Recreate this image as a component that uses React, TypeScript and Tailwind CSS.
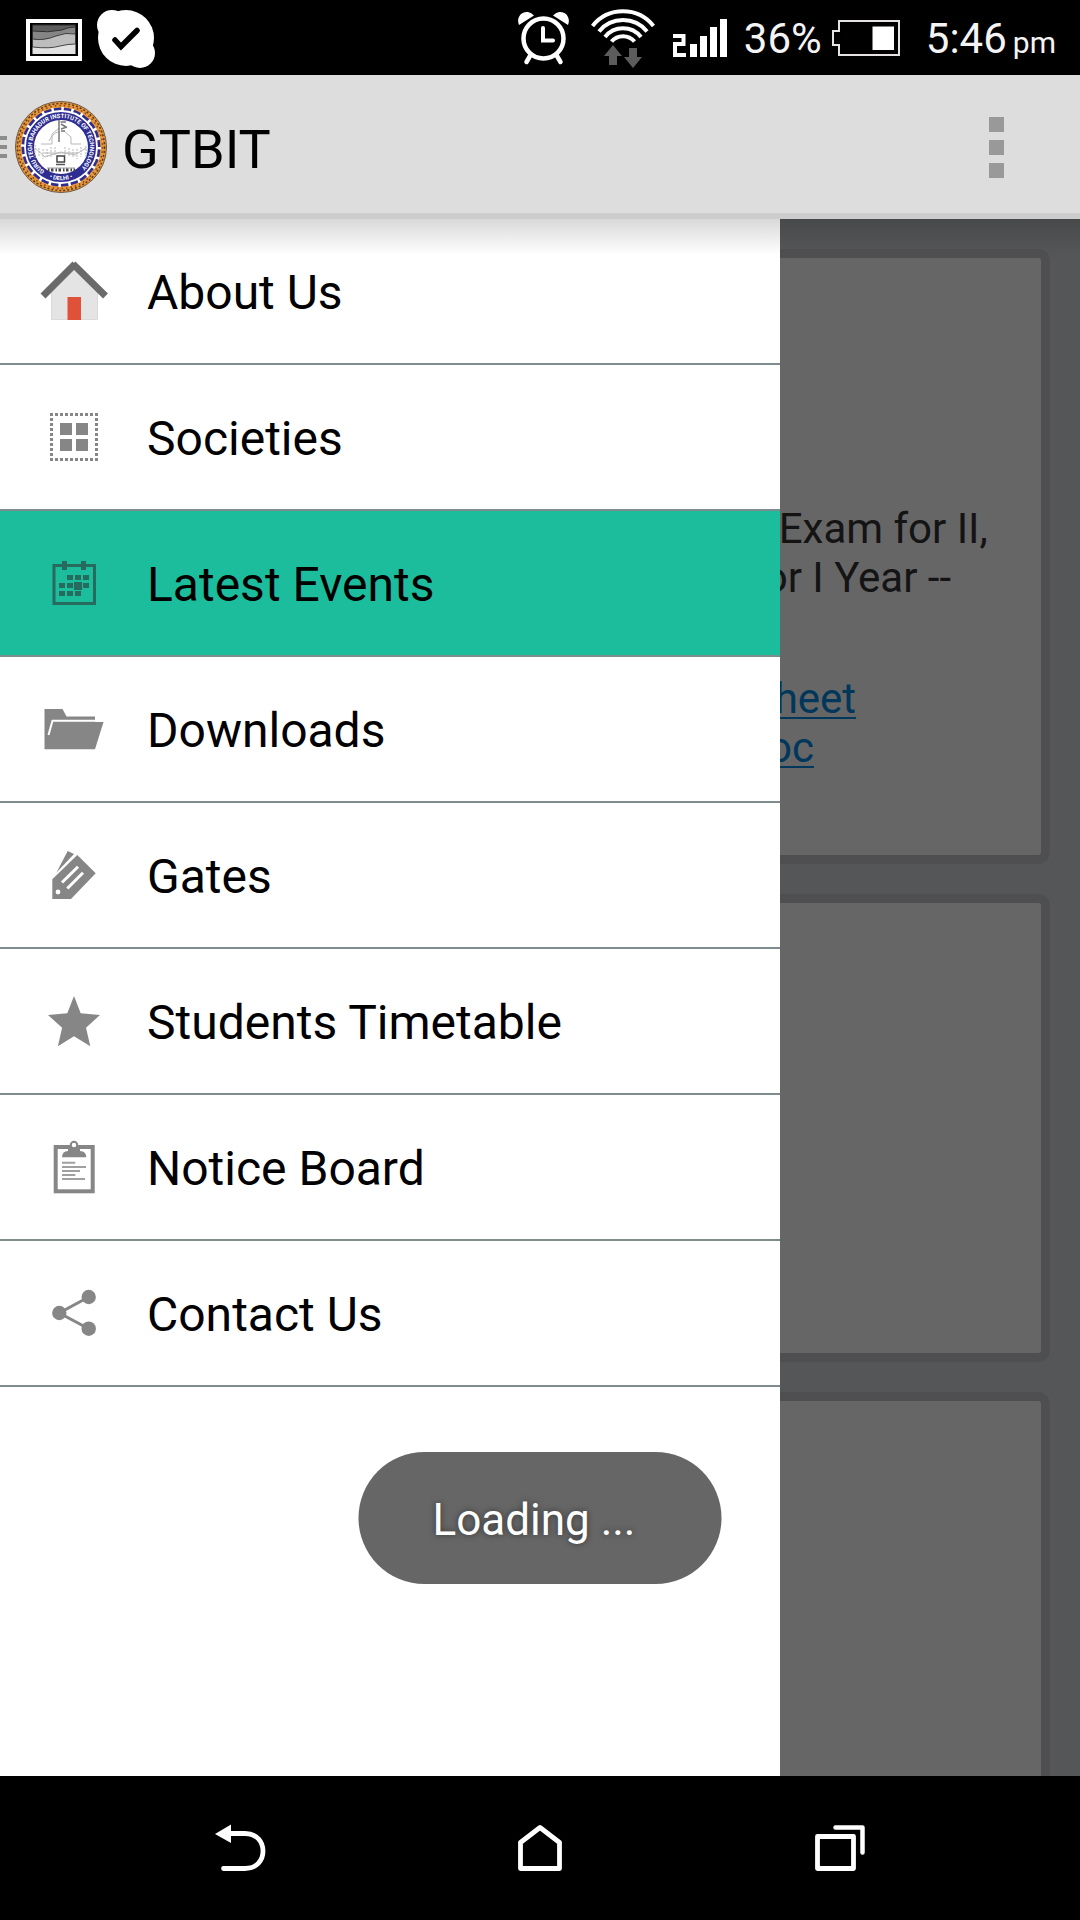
import type { ReactNode } from 'react';

const GREY = '#868686';

const HomeIcon = () => (
  <>
    <path d="M48 24 L72 48 V77 H25 V47 Z" fill="#e4e4e4" />
    <path d="M25.5 48 V76.5 H71.5 V48" fill="none" stroke="#dadada" />
    <rect x="41.5" y="54" width="13.5" height="23" fill="#df5239" />
    <path d="M17 53 L49 21 M47 21 L79.5 53" fill="none" stroke="#6a6a6a" strokeWidth="7" />
  </>
);

const SocietiesIcon = () => (
  <>
    <path
      d="M24 25.5 H72 M24 70.5 H72 M25.5 24 V72 M70.5 24 V72"
      fill="none"
      stroke={GREY}
      strokeWidth="3"
      strokeDasharray="3 2"
    />
    <path d="M34 34h12v12h-12z M50 34h12v12h-12z M34 50h12v12h-12z M50 50h12v12h-12z" fill={GREY} />
  </>
);

const CalendarIcon = () => (
  <>
    <rect x="28" y="30.5" width="40.5" height="38" fill="none" stroke="#276b5f" strokeWidth="3" />
    <path
      d="M36 26h5v9h-5z M55 26h5v9h-5z M41 40h6v5h-6z M49 40h6v5h-6z M57 40h6v5h-6z M33 48h6v5h-6z M41 48h6v5h-6z M48 47h8v8h-8z M57 48h6v5h-6z M33 56h6v5h-6z M41 56h6v5h-6z M49 56h6v5h-6z"
      fill="#276b5f"
    />
  </>
);

const FolderIcon = () => (
  <>
    <path d="M18.500 28 H36.500 L40.500 35.500 H69 V41 H77.500 L69 68.300 H18.500 Z" fill={GREY} />
    <path d="M22.500 54 L26.500 39.800 H70" fill="none" stroke="#fff" strokeWidth="2" />
  </>
);

const TagIcon = () => (
  <>
    <path d="M41.700 24 L48 27 L30.500 45.500 Z" fill={GREY} />
    <path d="M51.300 28 L69.700 46.300 L45 72 H26.300 V52.300 Z" fill={GREY} />
    <path d="M36 55.500 L52 39.800 M41.300 61.500 L57 45.800" stroke="#fff" strokeWidth="3" />
    <circle cx="32" cy="65" r="2.400" fill="#fff" />
  </>
);

const StarIcon = () => (
  <path
    d="M48 23 L54.700 40.300 L74 42 L60 54.700 L64.300 73.300 L48 63.300 L31.900 73.300 L36.100 54.700 L22 42 L41.300 40.300 Z"
    fill={GREY}
  />
);

const ClipboardIcon = () => (
  <>
    <rect x="29.700" y="28" width="37" height="44.300" fill="none" stroke={GREY} strokeWidth="4" />
    <path d="M36 38.300 Q36 32.500 42 32 V30 H54 V32 Q60.300 32.500 60.300 38.300 Z" fill={GREY} />
    <circle cx="48" cy="26" r="3.200" fill="#fff" stroke={GREY} strokeWidth="2" />
    <path d="M36 43.700 H49.300 M36 48 H60 M36 52 H54 M36 56 H49.300 M36 60 H59" stroke="#a0a0a0" strokeWidth="2" />
  </>
);

const ShareIcon = () => (
  <>
    <path d="M62.700 32 L33.300 48 L62.700 63.700" fill="none" stroke={GREY} strokeWidth="3" />
    <circle cx="33.300" cy="48" r="7.200" fill={GREY} />
    <circle cx="62.700" cy="32" r="7.200" fill={GREY} />
    <circle cx="62.700" cy="63.700" r="7.200" fill={GREY} />
  </>
);

const menu: { label: string; icon: ReactNode; active?: boolean }[] = [
  { label: 'About Us', icon: <HomeIcon /> },
  { label: 'Societies', icon: <SocietiesIcon /> },
  { label: 'Latest Events', icon: <CalendarIcon />, active: true },
  { label: 'Downloads', icon: <FolderIcon /> },
  { label: 'Gates', icon: <TagIcon /> },
  { label: 'Students Timetable', icon: <StarIcon /> },
  { label: 'Notice Board', icon: <ClipboardIcon /> },
  { label: 'Contact Us', icon: <ShareIcon /> },
];

function Logo() {
  return (
    <svg className="size-[92px]" viewBox="0 0 92 92" role="img" aria-label="GTBIT logo">
      <circle cx="46" cy="46" r="45.500" fill="#e8963c" stroke="#6d5a4a" />
      <circle cx="46" cy="46" r="43.500" fill="none" stroke="#5a3a14" strokeWidth="1.500" strokeDasharray="2 2" />
      <circle cx="46" cy="46" r="41.500" fill="none" stroke="#7a4a18" strokeWidth="1.500" strokeDasharray="1.500 3" />
      <circle cx="46" cy="46" r="39.500" fill="#2d2d92" />
      <circle cx="46" cy="46" r="38" fill="none" stroke="#fff" strokeWidth="4" strokeDasharray="2.500 7.450" />
      <circle cx="46" cy="46" r="36" fill="none" stroke="#fff" strokeWidth="1.800" />
      <circle cx="46" cy="46" r="27" fill="#fff" />
      <path id="ring-top" d="M29.800 70 A29 29 0 1 1 62.200 70" fill="none" />
      <path id="ring-bottom" d="M27 73.300 A33.300 33.300 0 0 0 65 73.300" fill="none" />
      <g fill="#fff" fontFamily="Roboto, sans-serif" fontWeight="700" fontSize="6">
        <text>
          <textPath href="#ring-top">GURU TEGH BAHADUR INSTITUTE OF TECHNOLOGY</textPath>
        </text>
        <text textAnchor="middle">
          <textPath href="#ring-bottom" startOffset="50%">• DELHI •</textPath>
        </text>
      </g>
      <g fill="none" stroke="#b8b8b8" strokeWidth="1">
        <path d="M20 44 V57 M24 47 V56 M28 48 V58 M32 48 V57 M36 46 V56 M40 46 V54 M50 46 V54 M54 47 V56 M58 48 V57 M62 48 V58 M66 46 V56 M71 45 V56" strokeDasharray="2 1" />
        <path d="M20 47 L30 56 L46 51 L60 54 L71 47 M26 43 H37 V33 L44 27 M49 30 L56 36 V43 H66 M34 40 Q38 32 43 31 M29 52 H63" />
      </g>
      <path d="M44 19 V41 M45.500 21 H51 M46 23 L51 26 M46 28 L52 26 M46 30 H50" stroke="#777" strokeWidth="1.500" fill="none" />
      <rect x="42" y="55" width="7.500" height="6" fill="#fff" stroke="#444" strokeWidth="1.500" />
      <path d="M41 63.500 H50" stroke="#555" strokeWidth="1.500" />
      <path d="M32 67 H60" stroke="#9a9a9a" strokeWidth="1" />
      <path d="M33 69 H60" stroke="#444" strokeWidth="3" strokeDasharray="1.500 1.500 2.500 2" />
    </svg>
  );
}

function StatusBar() {
  return (
    <div className="flex h-[75px] items-center justify-between bg-black pl-[26px] pr-6 text-[#f4f4f4]">
      <div className="flex items-center gap-[15px]">
        <svg className="h-[60px] w-14" viewBox="0 0 56 60" aria-label="Screenshot saved" role="img">
          <rect y="11" width="56" height="42" fill="#fff" />
          <rect x="4" y="15" width="48" height="33" fill="#000" />
          <rect x="6.500" y="17" width="43" height="29" fill="#e2e2e2" />
          <path d="M6.500 17 H49.500 V36 Q42 36 34 38 Q24 41 6.500 39 Z" fill="#bdbdbd" stroke="#222" strokeWidth=".800" />
          <path d="M6.500 17 H49.500 V26 Q40 24 30 28 Q18 33 6.500 31 Z" fill="#858585" stroke="#222" strokeWidth=".800" />
          <path d="M6.500 17 H49.500 V19 Q42 19 36 22 Q22 25 6.500 23 Z" fill="#5d5d5d" stroke="#222" strokeWidth=".800" />
        </svg>
        <svg className="size-[60px]" viewBox="0 0 60 60" aria-label="Skype" role="img">
          <circle cx="29" cy="30" r="28" fill="#fff" />
          <circle cx="15" cy="17" r="15" fill="#fff" />
          <circle cx="43" cy="45" r="15" fill="#fff" />
          <path d="M18 32 L24 38.500 L40 22.500" fill="none" stroke="#000" strokeWidth="5.500" strokeLinecap="round" />
        </svg>
      </div>
      <div className="flex items-center">
        <svg className="h-[60px] w-[54px]" viewBox="0 0 54 60" aria-label="Alarm" role="img">
          <circle cx="26.500" cy="30.500" r="20" fill="none" stroke="#fff" strokeWidth="4.500" />
          <path d="M26 20 V32.500 H36" fill="none" stroke="#fff" strokeWidth="4" strokeLinecap="round" />
          <path d="M13 48 L9.500 54 M40 48 L43.500 54" stroke="#fff" strokeWidth="4.500" strokeLinecap="round" />
          <path d="M2 17 C-1 10 4 3 11 4 Q14.500 4.500 17 7.500 Z M51 17 C54 10 49 3 42 4 Q38.500 4.500 36 7.500 Z" fill="#fff" />
        </svg>
        <svg className="ml-5 h-[62px] w-16" viewBox="0 0 64 62" aria-label="Wi-Fi" role="img">
          <g fill="none" stroke="#fff" strokeWidth="4">
            <path d="M1.500 19 A39 39 0 0 1 62.500 19" />
            <path d="M8 24.500 A31 31 0 0 1 56 24.500" />
            <path d="M14 30 A23 23 0 0 1 50 30" />
            <path d="M20.500 34.500 A15 15 0 0 1 43.500 34.500" />
          </g>
          <path d="M22 38 L31 49 H26 V58 H18 V49 H13 Z M38 41 H46 V50 H51 L42 61 L33 50 H38 Z" fill="#5c5c5c" />
        </svg>
        <svg className="ml-[18px] h-10 w-[54px]" viewBox="0 0 54 40" aria-label="Signal" role="img">
          <path d="M0 18 H10.500 V26 H2 V37 H13" fill="none" stroke="#fff" strokeWidth="4" />
          <path d="M17 26h7v13h-7z M27 18h7v21h-7z M37 9h7v30h-7z M47 1h7v38h-7z" fill="#fff" />
        </svg>
        <span className="ml-[17px] pt-[3px] text-[42px] leading-none">36%</span>
        <svg className="ml-[10px] h-9 w-[68px]" viewBox="0 0 68 36" aria-label="Battery" role="img">
          <path d="M7 1 H67 V35 H7 V25 H1 V11 H7 Z" fill="none" stroke="#e6e2e4" strokeWidth="2" />
          <rect x="40.500" y="6.500" width="21.500" height="23.500" fill="#fff" />
        </svg>
        <span className="ml-[26px] flex items-baseline gap-[6px] pt-[3px] leading-none">
          <span className="text-[42px]">5:46</span>
          <span className="text-[30px]">pm</span>
        </span>
      </div>
    </div>
  );
}

function AppBar() {
  return (
    <header className="flex h-[144px] items-center border-b-[6px] border-[#cccccc] bg-[#dddddd] pt-[6px]">
      <button type="button" aria-label="Open navigation" className="flex items-center gap-2">
        <span className="flex w-[7px] flex-col gap-[5px]">
          <span className="h-1 bg-[#8c8c8c]" />
          <span className="h-1 bg-[#8c8c8c]" />
          <span className="h-1 bg-[#8c8c8c]" />
        </span>
        <Logo />
      </button>
      <h1 className="ml-[15px] pt-[5px] text-[54px] leading-none">GTBIT</h1>
      <button type="button" aria-label="More options" className="ml-auto mr-[76px] flex flex-col gap-2">
        <span className="size-[15px] bg-[#999999]" />
        <span className="size-[15px] bg-[#999999]" />
        <span className="size-[15px] bg-[#999999]" />
      </button>
    </header>
  );
}

const cardStyle = 'rounded-xl border-[9px] border-[#c5c5ca] bg-white';

function Feed() {
  return (
    <div className="absolute inset-0 flex flex-col gap-[30px] overflow-hidden bg-[#d5d7dc] px-[30px] pt-[30px]">
      <article className={`${cardStyle} h-[615px] shrink-0 pl-[621px] pt-[246px] text-[42px] leading-[49px] text-[#333333]`}>
        <p className="whitespace-nowrap">
          Minor Exam for II,
          <br />
          also for I Year --
        </p>
        <p className="mt-[72px] whitespace-nowrap text-[#008ae4] underline decoration-2 underline-offset-4">
          <a href="#sheet">date sheet</a>
          <br />
          <a href="#doc">Info.doc</a>
        </p>
      </article>
      <article className={`${cardStyle} h-[468px] shrink-0`} />
      <article className={`${cardStyle} h-[468px] shrink-0`} />
      <div className="absolute inset-0 bg-black/60" />
    </div>
  );
}

function Drawer() {
  return (
    <nav className="relative w-[780px] max-w-full flex-1 bg-white">
      <ul>
        {menu.map((item) => (
          <li
            key={item.label}
            className={
              item.active
                ? 'border-b-2 border-[#7f8c8d] bg-[#1cbd9d]'
                : 'border-b-2 border-[#7f8c8d]'
            }
          >
            <a href="#menu" className="flex h-36 items-center gap-[25px] pl-[26px]">
              <svg className="size-24 shrink-0" viewBox="0 0 96 96" aria-hidden="true">
                {item.icon}
              </svg>
              <span className="pt-[3px] text-5xl">{item.label}</span>
            </a>
          </li>
        ))}
      </ul>
    </nav>
  );
}

function SystemNav() {
  return (
    <footer className="grid h-36 grid-cols-3 place-items-center bg-black px-[90px]">
      <button type="button" aria-label="Back">
        <svg className="h-12 w-[52px]" viewBox="0 0 52 48" aria-hidden="true">
          <path d="M1 10 L17 0.500 V19 Z" fill="#fff" />
          <path d="M15 9.500 H31 C43 9.500 49 18 49 27 C49 36 43 44.500 31 44.500 H9.500" fill="none" stroke="#fff" strokeWidth="4.800" strokeLinecap="round" />
        </svg>
      </button>
      <button type="button" aria-label="Home">
        <svg className="h-12 w-11" viewBox="0 0 44 48" aria-hidden="true">
          <path d="M2.500 44.500 V18.500 L22 3.500 L41.500 18.500 V44.500 Z" fill="none" stroke="#fff" strokeWidth="4.800" strokeLinejoin="round" />
        </svg>
      </button>
      <button type="button" aria-label="Recent apps">
        <svg className="h-12 w-[50px]" viewBox="0 0 50 48" aria-hidden="true">
          <rect x="2.500" y="12.500" width="36" height="32" fill="none" stroke="#fff" strokeWidth="4.800" strokeLinejoin="round" />
          <path d="M20.500 3.500 H47.500 V28.500" fill="none" stroke="#fff" strokeWidth="4.500" strokeLinecap="round" strokeLinejoin="round" />
        </svg>
      </button>
    </footer>
  );
}

export default function App() {
  return (
    <div className="flex min-h-screen flex-col bg-black font-[Roboto,sans-serif] text-black">
      <StatusBar />
      <AppBar />
      <main className="relative flex flex-1 flex-col">
        <Feed />
        <Drawer />
        <div className="pointer-events-none absolute inset-x-0 top-0 h-9 bg-linear-to-b from-black/15 to-transparent" />
        <div
          role="status"
          className="absolute bottom-48 left-1/2 flex h-[132px] w-[363px] -translate-x-1/2 items-center rounded-full bg-[#666666] pl-[74px] pt-1 text-[44px] text-white text-shadow-[0_0_6px_#00000080]"
        >
          Loading ...
        </div>
      </main>
      <SystemNav />
    </div>
  );
}
